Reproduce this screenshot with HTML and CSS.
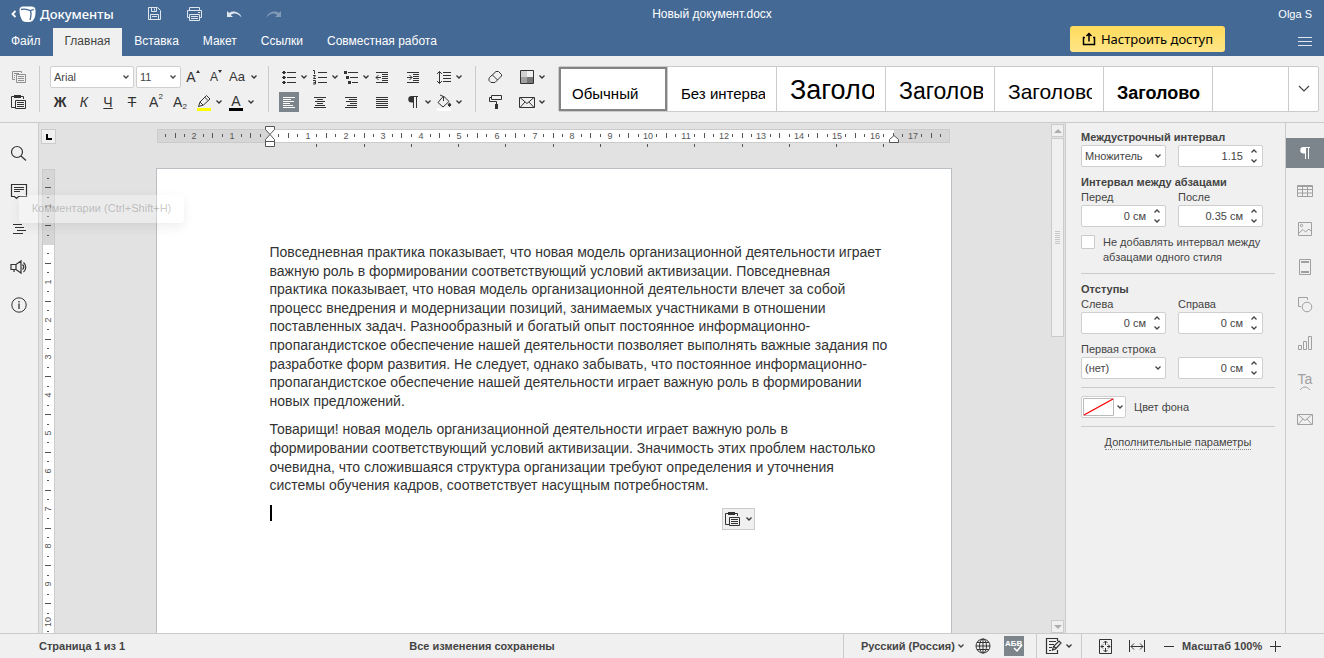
FILE: index.html
```html
<!DOCTYPE html>
<html lang="ru">
<head>
<meta charset="utf-8">
<title>Новый документ.docx</title>
<link rel="stylesheet" href="styles.css">
</head>
<body>
<svg class="defs" aria-hidden="true">
  <symbol id="chev" viewBox="0 0 8 8"><path d="M1.500 2.500L4 5l2.500-2.500" fill="none" stroke="currentColor" stroke-width="1.300"/></symbol>
  <symbol id="up" viewBox="0 0 8 8"><path d="M1.500 5.500L4 3l2.500 2.500" fill="none" stroke="currentColor" stroke-width="1.300"/></symbol>
  <symbol id="paste" viewBox="0 0 20 20"><path d="M6 15.500H2.500v-11H5M12 4.500h2.500V7" fill="none" stroke="currentColor"/><path d="M5 3h7v3H5z" fill="currentColor"/><path d="M6.500 8.500h10v8h-10zM8 10.500h7M8 12.500h7M8 14.500h7" fill="none" stroke="currentColor"/></symbol>
  <symbol id="mail" viewBox="0 0 20 20"><path d="M2.500 5.500h15v10h-15zM3 5.500l7 6 7-6M3 15.500l5-5.500M17 15.500L12 10" fill="none" stroke="currentColor"/></symbol>
  <symbol id="para" viewBox="0 0 20 20"><path d="M15 4.500H8.500M10.500 4v12M13.500 4v12" fill="none" stroke="currentColor"/><path d="M11 4H8.500a3.200 3.200 0 0 0 0 6.500H11z" fill="currentColor"/></symbol>
</svg>

<header class="header">
  <div class="header-main">
    <div class="title-row">
      <a class="brand" href="#">
        <svg width="26" height="18" viewBox="0 0 26 18"><path d="M5.500 6L2.500 9l3 3" fill="none" stroke="#fff" stroke-width="1.800"/><path fill="#fff" d="M13 1.500h8.500q4 0 4 4c0 4 0 6-1.500 8.500q-1.500 3-4 3h-4q-3.500 0-4.500-3C10 11 9.500 8 9.500 5q0-3.500 3.500-3.500z"/><path d="M11 4.500c3-.7 7-.2 9.500 1.200 1 3 .5 6-.5 9.300M20 5.700l4-1.200" fill="none" stroke="#446995" stroke-width="1.300"/></svg>
        <span>Документы</span>
      </a>
      <div class="quick">
        <button aria-label="Сохранить"><svg width="20" height="20" viewBox="0 0 20 20"><path d="M4.500 3.500h9l3 3v9h-12zM7.500 3.500v4h5v-4M10.500 4.500v2M6.500 15.500v-5h8v5M8 12.500h5" fill="none" stroke="currentColor"/></svg></button>
        <button aria-label="Печать"><svg width="20" height="20" viewBox="0 0 20 20"><path d="M5.500 6.500v-3h10v3M5.500 13.500h-2v-7h14v7h-2M5.500 10.500h10v6h-10zM7 12.500h7M7 14.500h7M14 8.500h2" fill="none" stroke="currentColor"/></svg></button>
        <button aria-label="Отменить"><svg width="20" height="20" viewBox="0 0 20 20"><path d="M3 7v6h6L6.800 11c3-2.500 7-2 10.700 2.500C16.500 8.500 9.500 5.500 5.200 9z" fill="currentColor"/></svg></button>
        <button aria-label="Повторить" disabled><svg width="20" height="20" viewBox="0 0 20 20"><path d="M17 7v6h-6l2.200-2c-3-2.500-7-2-10.700 2.500C3.500 8.500 10.500 5.500 14.800 9z" fill="currentColor"/></svg></button>
      </div>
      <div class="doc-title">Новый документ.docx</div>
    </div>
    <nav class="tabs">
      <button>Файл</button><button class="active">Главная</button><button>Вставка</button><button>Макет</button><button>Ссылки</button><button>Совместная работа</button>
    </nav>
  </div>
  <button class="share"><svg width="14" height="14" viewBox="0 0 14 14"><path d="M3 5.500H1.500v7h11v-7H11M7 9.500V2M4.500 4L7 1.500 9.500 4" fill="none" stroke="#000" stroke-width="1.500"/></svg>Настроить доступ</button>
  <div class="header-side">
    <div class="user">Olga S</div>
    <button class="burger" aria-label="Меню"><svg width="14" height="10" viewBox="0 0 14 10"><path d="M0 .5h14M0 4.500h14M0 8.500h14" stroke="#dfe6ee"/></svg></button>
  </div>
</header>

<div class="toolbar">
  <div class="group clip">
    <div class="row"><button class="dim" aria-label="Копировать"><svg width="20" height="20" viewBox="0 0 20 20"><path d="M6 12.500H3.500v-8h9V6M5 6.500h5M5 8.500h1M5 10.500h1M7.500 7.500h9v8h-9zM9 9.500h6M9 11.500h6M9 13.500h6" fill="none" stroke="currentColor"/></svg></button></div>
    <div class="row"><button aria-label="Вставить"><svg width="20" height="20"><use href="#paste"/></svg></button></div>
  </div>
  <div class="group font">
    <div class="row">
      <label class="pick family"><select aria-label="Шрифт"><option>Arial</option></select><svg width="8" height="8"><use href="#chev"/></svg></label>
      <label class="pick size"><select aria-label="Размер"><option>11</option></select><svg width="8" height="8"><use href="#chev"/></svg></label>
      <div class="letters">
        <button aria-label="Увеличить размер">A<svg class="tri" width="4" height="4"><path d="M0 3l2-3 2 3z" fill="currentColor"/></svg></button>
        <button class="smaller" aria-label="Уменьшить размер">A<svg class="tri" width="4" height="4"><path d="M0 0l2 3 2-3z" fill="currentColor"/></svg></button>
        <button class="split" aria-label="Регистр"><span>Aa</span><svg width="8" height="8"><use href="#chev"/></svg></button>
      </div>
    </div>
    <div class="row glyphs">
      <button><b>Ж</b></button><button><i>К</i></button><button><u>Ч</u></button><button><s>Т</s></button><button>A<sup>2</sup></button><button>A<sub>2</sub></button>
      <button class="split" aria-label="Цвет выделения"><svg width="20" height="20" viewBox="0 0 20 20"><path d="M4.500 14.500l1.500-4.500 6.500-6.500 3.500 3.500-6.500 6zM10.500 5l3.500 3.500M6 10l3 3" fill="none" stroke="currentColor"/><path d="M3 16h14v3H3z" fill="#ff0"/></svg><svg width="8" height="8"><use href="#chev"/></svg></button>
      <button class="split" aria-label="Цвет шрифта"><span class="ink">A</span><svg width="8" height="8"><use href="#chev"/></svg></button>
    </div>
  </div>
  <div class="group para-group">
    <button class="split" aria-label="Маркеры"><svg width="20" height="20" viewBox="0 0 20 20"><path d="M8 5.500h9M8 10.500h9M8 15.500h9" stroke="currentColor"/><path d="M4 4h2v1h1v1H6v1H4V6H3V5h1zM4 9h2v1h1v1H6v1H4v-1H3v-1h1zM4 14h2v1h1v1H6v1H4v-1H3v-1h1z" fill="currentColor"/></svg><svg width="8" height="8"><use href="#chev"/></svg></button>
    <button class="split" aria-label="Нумерация"><svg width="20" height="20" viewBox="0 0 20 20"><path d="M8 5.500h9M8 10.500h9M8 15.500h9M3 3.500h1.500V7M3 8.500h2.500l-2 3H6M3 13.500h2.500v3.500H3M3.500 15.500h2" fill="none" stroke="currentColor"/></svg><svg width="8" height="8"><use href="#chev"/></svg></button>
    <button class="split" aria-label="Многоуровневый список"><svg width="20" height="20" viewBox="0 0 20 20"><path d="M7 5.500h10M9 10.500h8M11 15.500h6" stroke="currentColor"/><path d="M3 4h3v3H3zM5 9h3v3H5zM7 14h3v3H7z" fill="currentColor"/></svg><svg width="8" height="8"><use href="#chev"/></svg></button>
    <button aria-label="Уменьшить отступ"><svg width="20" height="20" viewBox="0 0 20 20"><path d="M4 5.500h12M10 7.500h6M10 9.500h6M10 11.500h6M10 13.500h6M4 15.500h12M4 10.500h5M6.500 8L4 10.500 6.500 13" fill="none" stroke="currentColor"/></svg></button>
    <button aria-label="Увеличить отступ"><svg width="20" height="20" viewBox="0 0 20 20"><path d="M4 5.500h12M10 7.500h6M10 9.500h6M10 11.500h6M10 13.500h6M4 15.500h12M4 10.500h5M6.500 8L9 10.500 6.500 13" fill="none" stroke="currentColor"/></svg></button>
    <button class="split" aria-label="Междустрочный интервал"><svg width="20" height="20" viewBox="0 0 20 20"><path d="M9 5.500h8M9 8.500h8M9 11.500h8M9 14.500h8M5.500 4.500v12M3 7l2.500-2.500L8 7M3 14l2.500 2.500L8 14" fill="none" stroke="currentColor"/></svg><svg width="8" height="8"><use href="#chev"/></svg></button>
    <button class="pressed" aria-label="По левому краю"><svg width="20" height="20" viewBox="0 0 20 20"><path d="M4 5.500h12M4 7.500h8M4 9.500h11M4 11.500h7M4 13.500h10M4 15.500h12" stroke="currentColor"/></svg></button>
    <button aria-label="По центру"><svg width="20" height="20" viewBox="0 0 20 20"><path d="M4 5.500h12M7 7.500h6M5 9.500h10M7 11.500h6M5 13.500h10M4 15.500h12" stroke="currentColor"/></svg></button>
    <button aria-label="По правому краю"><svg width="20" height="20" viewBox="0 0 20 20"><path d="M4 5.500h12M8 7.500h8M5 9.500h11M9 11.500h7M6 13.500h10M4 15.500h12" stroke="currentColor"/></svg></button>
    <button aria-label="По ширине"><svg width="20" height="20" viewBox="0 0 20 20"><path d="M4 5.500h12M4 7.500h12M4 9.500h12M4 11.500h12M4 13.500h12M4 15.500h12" stroke="currentColor"/></svg></button>
    <button class="split" aria-label="Непечатаемые символы"><svg width="20" height="20"><use href="#para"/></svg><svg width="8" height="8"><use href="#chev"/></svg></button>
    <button class="split" aria-label="Цвет заливки"><svg width="20" height="20" viewBox="0 0 20 20"><path d="M3 16h14v3H3z" fill="#fff"/><path d="M4 10.500L9.500 4l5.500 5.500-6 5.500zM9.500 9V4.500L6 3" fill="none" stroke="currentColor"/><path d="M15.500 11l1.500 2-1.500 1.500L14 13z" fill="currentColor" stroke="currentColor"/></svg><svg width="8" height="8"><use href="#chev"/></svg></button>
  </div>
  <div class="group misc">
    <button aria-label="Очистить стиль"><svg width="20" height="20" viewBox="0 0 20 20"><path d="M4.500 10.500L11 4.500h2.500l3 3V9l-6.500 6.500H6L4 13.500v-2zM7.500 8l5 5" fill="none" stroke="currentColor"/></svg></button>
    <button class="split" aria-label="Цветовая схема"><svg width="20" height="20" viewBox="0 0 20 20"><path d="M4 4h6v6H4z" fill="#d0d0d0"/><path d="M10 4h6v6h-6z" fill="#f0f0f0"/><path d="M4 10h6v6H4z" fill="#a0a0a0"/><path d="M10 10h6v6h-6z" fill="#777"/><path d="M3.500 3.500h13v13h-13z" fill="none" stroke="currentColor"/></svg><svg width="8" height="8"><use href="#chev"/></svg></button>
    <button aria-label="Копировать стиль"><svg width="20" height="20" viewBox="0 0 20 20"><path d="M6.500 3.500h10v4h-10zM6.500 5.500h-2v4h7V12" fill="none" stroke="currentColor"/><path d="M10 12h3v5h-3z" fill="currentColor"/></svg></button>
    <button class="split" aria-label="Слияние"><svg width="20" height="20"><use href="#mail"/></svg><svg width="8" height="8"><use href="#chev"/></svg></button>
  </div>
  <div class="gallery">
    <button class="style chosen"><span>Обычный</span></button>
    <button class="style"><span>Без интервала</span></button>
    <button class="style h1"><span>Заголовок 1</span></button>
    <button class="style h2"><span>Заголовок 2</span></button>
    <button class="style h3"><span>Заголовок 3</span></button>
    <button class="style h4"><span>Заголовок 4</span></button>
    <div class="filler"></div>
    <button class="more" aria-label="Все стили"><svg width="12" height="8" viewBox="0 0 12 8"><path d="M1 1l5 5 5-5" fill="none" stroke="#444" stroke-width="1.200"/></svg></button>
  </div>
</div>

<main class="work">
  <aside class="rail left">
    <button aria-label="Поиск"><svg width="20" height="20" viewBox="0 0 20 20"><circle cx="8" cy="9" r="5.500" fill="none" stroke="currentColor" stroke-width="1.200"/><path d="M12 13l5 4.500" stroke="currentColor" stroke-width="1.200"/></svg></button>
    <button aria-label="Комментарии"><svg width="20" height="20" viewBox="0 0 20 20"><path d="M2.500 3.500h15v12H9.500l-2 2-2-2h-3zM5 6.500h10M5 8.500h10M5 10.500h6" fill="none" stroke="currentColor" stroke-width="1.200"/></svg></button>
    <button aria-label="Навигация"><svg width="20" height="20" viewBox="0 0 20 20"><path d="M4 5.500h9M6 8.500h9M8 11.500h9M4 14.500h10" stroke="currentColor"/></svg></button>
    <button aria-label="Обратная связь"><svg width="20" height="20" viewBox="0 0 20 20"><path d="M2 7.500h5L12 4v12l-5-3.500H2zM7 7.500v5M5 12.500V15M13.500 7.500c1.500 1.500 1.500 3.500 0 5M14.500 5.500c3 2.500 3 7 0 9.500" fill="none" stroke="currentColor" stroke-width="1.200"/></svg></button>
    <button aria-label="О программе"><svg width="20" height="20" viewBox="0 0 20 20"><circle cx="10" cy="10" r="7.200" fill="none" stroke="currentColor"/><path d="M10 8.500V14M10 6v1.500" stroke="currentColor" stroke-width="1.300"/></svg></button>
    <div class="tooltip">Комментарии (Ctrl+Shift+H)</div>
  </aside>

  <section class="editor">
    <button class="tab-kind" aria-label="Табуляция"><svg width="6" height="6"><path d="M1 0v5h5" fill="none" stroke="#000" stroke-width="2"/></svg></button>
    <div class="ruler-h"><svg id="rulerH" width="796" height="24"></svg></div>
    <div class="ruler-v"><svg id="rulerV" width="13" height="1123"></svg></div>
    <div class="canvas">
      <article class="page">
        <p>Повседневная практика показывает, что новая модель организационной деятельности играет<br>важную роль в формировании соответствующий условий активизации. Повседневная<br>практика показывает, что новая модель организационной деятельности влечет за собой<br>процесс внедрения и модернизации позиций, занимаемых участниками в отношении<br>поставленных задач. Разнообразный и богатый опыт постоянное информационно-<br>пропагандистское обеспечение нашей деятельности позволяет выполнять важные задания по<br>разработке форм развития. Не следует, однако забывать, что постоянное информационно-<br>пропагандистское обеспечение нашей деятельности играет важную роль в формировании<br>новых предложений.</p>
        <p>Товарищи! новая модель организационной деятельности играет важную роль в<br>формировании соответствующий условий активизации. Значимость этих проблем настолько<br>очевидна, что сложившаяся структура организации требуют определения и уточнения<br>системы обучения кадров, соответствует насущным потребностям.</p>
        <p><span class="caret"></span></p>
        <button class="paste-menu" aria-label="Параметры вставки"><svg width="20" height="20"><use href="#paste"/></svg><svg width="8" height="8"><use href="#chev"/></svg></button>
      </article>
    </div>
    <div class="scroll">
      <button aria-label="Вверх"><svg width="8" height="4"><path d="M0 4l4-4 4 4z" fill="#adadad"/></svg></button>
      <div class="thumb"><svg width="5" height="13"><path d="M0 .5h5M0 2.500h5M0 4.500h5M0 6.500h5M0 8.500h5M0 10.500h5M0 12.500h5" stroke="#c8c8c8"/></svg></div>
      <button aria-label="Вниз"><svg width="8" height="4"><path d="M0 0l4 4 4-4z" fill="#adadad"/></svg></button>
    </div>
  </section>

  <aside class="panel">
    <h2>Междустрочный интервал</h2>
    <div class="pair">
      <label class="pick"><select aria-label="Междустрочный интервал"><option>Множитель</option></select><svg width="8" height="8"><use href="#chev"/></svg></label>
      <div class="spin"><input aria-label="Значение" value="1.15"><div><button aria-label="Больше"><svg width="8" height="8"><use href="#up"/></svg></button><button aria-label="Меньше"><svg width="8" height="8"><use href="#chev"/></svg></button></div></div>
    </div>
    <h2>Интервал между абзацами</h2>
    <div class="pair">
      <label for="before">Перед</label><label for="after">После</label>
      <div class="spin"><input id="before" value="0 см"><div><button aria-label="Больше"><svg width="8" height="8"><use href="#up"/></svg></button><button aria-label="Меньше"><svg width="8" height="8"><use href="#chev"/></svg></button></div></div>
      <div class="spin"><input id="after" value="0.35 см"><div><button aria-label="Больше"><svg width="8" height="8"><use href="#up"/></svg></button><button aria-label="Меньше"><svg width="8" height="8"><use href="#chev"/></svg></button></div></div>
    </div>
    <label class="check"><input type="checkbox"><span>Не добавлять интервал между абзацами одного стиля</span></label>
    <hr>
    <h2>Отступы</h2>
    <div class="pair">
      <label for="left">Слева</label><label for="right">Справа</label>
      <div class="spin"><input id="left" value="0 см"><div><button aria-label="Больше"><svg width="8" height="8"><use href="#up"/></svg></button><button aria-label="Меньше"><svg width="8" height="8"><use href="#chev"/></svg></button></div></div>
      <div class="spin"><input id="right" value="0 см"><div><button aria-label="Больше"><svg width="8" height="8"><use href="#up"/></svg></button><button aria-label="Меньше"><svg width="8" height="8"><use href="#chev"/></svg></button></div></div>
    </div>
    <div class="pair first-line">
      <label class="wide" for="first">Первая строка</label>
      <div class="pick"><select id="first"><option>(нет)</option></select><svg width="8" height="8"><use href="#chev"/></svg></div>
      <div class="spin"><input aria-label="Отступ первой строки" value="0 см"><div><button aria-label="Больше"><svg width="8" height="8"><use href="#up"/></svg></button><button aria-label="Меньше"><svg width="8" height="8"><use href="#chev"/></svg></button></div></div>
    </div>
    <hr>
    <div class="fill"><button id="bg" aria-label="Цвет фона"><svg width="32" height="18" viewBox="0 0 32 18"><path d="M.5.500h30v17H.5z" fill="#fff" stroke="#bbb"/><path d="M1 17L30 1" stroke="#f00" stroke-width="1.300"/></svg><svg width="8" height="8"><use href="#chev"/></svg></button><label for="bg">Цвет фона</label></div>
    <hr>
    <div class="extra"><a href="#">Дополнительные параметры</a></div>
  </aside>

  <aside class="rail right">
    <button class="pressed" aria-label="Абзац"><svg width="20" height="20"><use href="#para"/></svg></button>
    <button aria-label="Таблица"><svg width="20" height="20" viewBox="0 0 20 20"><path d="M2.500 4.500h15v11h-15zM2.500 8.500h15M2.500 12h15M7.500 5.500v10M12.500 5.500v10M3 5.500h15" fill="none" stroke="currentColor"/></svg></button>
    <button aria-label="Изображение"><svg width="20" height="20" viewBox="0 0 20 20"><path d="M3.500 3.500h13v13h-13zM4 14l4-3.500 2.500 2.500 3.500-3 2.500 2.500" fill="none" stroke="currentColor"/><circle cx="6.500" cy="6.500" r="1.200" fill="none" stroke="currentColor"/></svg></button>
    <button aria-label="Колонтитулы"><svg width="20" height="20" viewBox="0 0 20 20"><path d="M4.500 2.500h11v15h-11z" fill="none" stroke="currentColor"/><path d="M6 5h8M6 15h8" stroke="currentColor" stroke-width="2"/></svg></button>
    <button aria-label="Фигура"><svg width="20" height="20" viewBox="0 0 20 20"><path d="M6 11.500H3.500v-9h9V5" fill="none" stroke="currentColor"/><circle cx="12" cy="12" r="4.800" fill="none" stroke="currentColor"/></svg></button>
    <button aria-label="Диаграмма"><svg width="20" height="20" viewBox="0 0 20 20"><path d="M3.500 12.500h3v4h-3zM8.500 8.500h3v8h-3zM13.500 3.500h3v13h-3z" fill="none" stroke="currentColor"/></svg></button>
    <button class="art" aria-label="Text Art"><span>Ta</span><svg width="12" height="4"><path d="M1 4c3-4 7-4 10 0" fill="none" stroke="currentColor"/></svg></button>
    <button aria-label="Слияние"><svg width="20" height="20"><use href="#mail"/></svg></button>
  </aside>
</main>

<footer class="status">
  <div class="page-no">Страница 1 из 1</div>
  <div class="saved">Все изменения сохранены</div>
  <div class="seg lang">
    <button class="language">Русский (Россия)<svg width="8" height="8"><use href="#chev"/></svg></button>
    <button aria-label="Язык документа"><svg width="20" height="20" viewBox="0 0 20 20"><g fill="none" stroke="currentColor"><circle cx="10" cy="10" r="7"/><ellipse cx="10" cy="10" rx="3.500" ry="7"/><path d="M10 3v14M3 10h14M4 6.500h12M4 13.500h12"/></g></svg></button>
    <button class="pressed spell" aria-label="Проверка орфографии"><svg width="20" height="20" viewBox="0 0 20 20"><text x="1" y="10" class="abc">АБВ</text><path d="M10 12l3 3 5-6" fill="none" stroke="#fff" stroke-width="1.500"/></svg></button>
  </div>
  <div class="seg track">
    <button class="split" aria-label="Отслеживание"><svg width="20" height="20" viewBox="0 0 20 20"><path d="M13.500 5V2.500h-11v15h11V14M5 5.500h7M5 8.500h5M5 11.500h3M5 14.500h2M8.500 14l1-3.500L15 5l2 2-5.500 6zM10 10.500l2 2" fill="none" stroke="currentColor" stroke-width="1.200"/></svg><svg width="8" height="8"><use href="#chev"/></svg></button>
  </div>
  <div class="seg zoom">
    <button aria-label="По размеру страницы"><svg width="20" height="20" viewBox="0 0 20 20"><path d="M4.500 3.500h12v14h-12zM10.500 5v4M10.500 12v4M6 10.500h3M12 10.500h3M8.500 7l2-2 2 2M8.500 14l2 2 2-2M8 8.500l-2 2 2 2M13 8.500l2 2-2 2" fill="none" stroke="currentColor"/></svg></button>
    <button aria-label="По ширине"><svg width="20" height="20" viewBox="0 0 20 20"><path d="M2.500 4v12M17.500 4v12M4 10.500h12M7 7.500l-3 3 3 3M13 7.500l3 3-3 3" fill="none" stroke="currentColor"/></svg></button>
    <button aria-label="Уменьшить"><svg width="20" height="20" viewBox="0 0 20 20"><path d="M5 10.500h10" stroke="currentColor" stroke-width="1"/></svg></button>
    <span class="scale">Масштаб 100%</span>
    <button aria-label="Увеличить"><svg width="20" height="20" viewBox="0 0 20 20"><path d="M5 10.500h11M10.500 5v11" stroke="currentColor"/></svg></button>
  </div>
</footer>
<script src="rulers.js"></script>
</body>
</html>
```
FILE: styles.css
```css
* { box-sizing: border-box; }
body { margin: 0; height: 100vh; display: flex; flex-direction: column; overflow: hidden; background: #f0f0f0; color: #444; font: 11px/15px "Liberation Sans", Arial, sans-serif; }
button { display: flex; align-items: center; justify-content: center; padding: 0; border: 0; background: none; color: inherit; font: inherit; }
svg { display: block; flex: none; }
.defs { position: absolute; width: 0; height: 0; }
.pressed { background: #7d858c; color: #fff; }

/* header */
.header { flex: none; display: flex; background: #446995; color: #fff; }
.header-main { flex: 1; }
.title-row { display: flex; align-items: center; height: 28px; }
.brand { display: flex; align-items: center; gap: 4px; width: 134px; padding-left: 10px; color: #fff; text-decoration: none; font: 500 13px/18px "Noto Sans", "Open Sans", sans-serif; }
.quick { display: flex; width: 220px; color: #dfe6ee; }
.quick button { width: 40px; height: 28px; }
.quick button:disabled { opacity: .4; }
.doc-title { flex: 1; text-align: center; font-size: 12px; }
.tabs { display: flex; height: 28px; }
.tabs button { padding: 0 12px 2px; font-size: 12px; }
.tabs button:first-child { padding-left: 11px; }
.tabs .active { background: #f0f0f0; color: #444; }
.share { align-self: flex-end; gap: 5px; width: 155px; height: 26px; margin-bottom: 4px; border-radius: 3px; background: linear-gradient(#ffdb5c, #ffe587); color: #000; font: 13px/18px "Noto Sans", "Open Sans", sans-serif; }
.header-side { width: 99px; padding-right: 12px; display: flex; flex-direction: column; align-items: flex-end; }
.user { line-height: 28px; }
.burger { height: 28px; }

/* toolbar */
.toolbar { flex: none; display: flex; height: 67px; padding: 10px 5px 0 0; border-bottom: 1px solid #cbcbcb; color: #333; }
.toolbar button { height: 20px; width: 20px; }
.toolbar button.split { width: 30px; }
.split { gap: 1px; justify-content: flex-start; }
.row { display: flex; align-items: center; height: 22px; margin-bottom: 3px; }
.group { height: 46px; border-right: 1px solid #cbcbcb; }
.clip { width: 40px; padding-left: 9px; }
.dim { opacity: .5; }
.font { width: 229px; padding-left: 10px; }
.font .row { gap: 2px; }
.font .glyphs { gap: 4px; font-size: 14px; }
.font .glyphs .split { margin-right: -2px; }
.pick { display: grid; align-items: center; height: 22px; border: 1px solid #cfcfcf; border-radius: 2px; background: #fff; color: #444; }
.pick select { grid-area: 1 / 1; width: 100%; height: 20px; padding: 0 3px; border: 0; background: none; appearance: none; color: inherit; font: inherit; }
.pick svg { grid-area: 1 / 1; justify-self: end; margin-right: 3px; pointer-events: none; }
.family { width: 84px; }
.size { width: 45px; }
.letters { display: flex; gap: 3px; font-size: 14px; }
.letters button { align-items: flex-start; line-height: 20px; }
.letters .split { align-items: center; font-size: 13px; width: 28px; }
.letters .split span { width: 20px; text-align: left; }
.letters .smaller { font-size: 12px; }
.tri { margin-top: 3px; }
.glyphs sup, .glyphs sub { font-size: 8px; line-height: 10px; }
.glyphs sup { align-self: flex-start; }
.glyphs sub { align-self: flex-end; }
.ink { width: 14px; height: 18px; margin: 0 3px; border-bottom: 3px solid #000; line-height: 16px; text-align: center; }
.para-group { display: grid; grid-template: 22px 22px / repeat(6, 31px); row-gap: 3px; align-items: center; width: 207px; padding-left: 10px; }
.misc { display: grid; grid-template: 22px 22px / 32px 32px; row-gap: 3px; align-items: center; width: 82px; padding-left: 9px; border: 0; }
.gallery { flex: 1; display: flex; height: 46px; border: 1px solid #cbcbcb; border-radius: 2px; background: #fff; color: #000; }
.toolbar .style { display: block; flex: none; width: 109px; height: 44px; padding: 0 11px 0 13px; border-right: 1px solid #cbcbcb; text-align: left; font-size: 15px; line-height: 1; }
.style span { display: block; overflow: hidden; height: 44px; white-space: nowrap; }
.style span::before { content: ""; display: inline-block; height: 32px; }
.toolbar .chosen { box-shadow: inset 0 0 0 2px #848484; }
.toolbar .h1 { font-size: 27px; }
.toolbar .h2 { font-size: 23px; }
.toolbar .h3 { font-size: 21px; }
.toolbar .h4 { font-size: 18px; font-weight: bold; }
.filler { flex: 1; }
.toolbar .more { width: 30px; height: 44px; border-left: 1px solid #cbcbcb; }

/* workspace */
.work { flex: 1; min-height: 0; display: flex; }
.rail { flex: none; display: flex; flex-direction: column; gap: 8px; width: 39px; padding-top: 15px; color: #333; }
.rail button { width: 38px; height: 30px; }
.left { position: relative; border-right: 1px solid #cbcbcb; }
.right { border-left: 1px solid #cbcbcb; color: #a0a0a0; }
.right .pressed { color: #fff; }
.rail .art { flex-direction: column; font-size: 14px; line-height: 14px; }
.tooltip { position: absolute; z-index: 2; left: 19px; top: 72px; width: 165px; height: 28px; border-radius: 4px; background: rgba(255, 255, 255, .3); box-shadow: 0 4px 12px rgba(0, 0, 0, .07); color: rgba(68, 68, 68, .3); line-height: 27px; text-align: center; white-space: nowrap; }

.editor { flex: 1; min-width: 0; display: grid; grid-template: 45px minmax(0, 1fr) / 17px minmax(0, 1fr) 14px; overflow: hidden; background: #e2e2e2; }
.tab-kind { width: 15px; height: 15px; margin: 6px 0 0 2px; border: 1px solid #cbcbcb; background: #f0f0f0; }
.ruler-h { grid-column: 2; display: flex; justify-content: center; padding-top: 3px; overflow: hidden; }
.ruler-v { grid-area: 2 / 1; padding: 1px 0 0 3px; overflow: hidden; }
#rulerH, #rulerV { font-size: 9px; fill: #555; }
.canvas { grid-area: 2 / 2; display: flex; justify-content: center; overflow: hidden; }
.page { position: relative; flex: none; width: 796px; height: 1123px; padding: 74px 56px 0 113px; border: 1px solid #bbbec2; background: #fff; color: #333; font-size: 14px; line-height: 1.33; white-space: nowrap; }
.page p { margin: 0 0 10px; }
.caret { display: block; width: 2px; height: 16px; background: #000; }
.paste-menu { position: absolute; left: 565px; top: 339px; width: 33px; height: 22px; gap: 2px; border: 1px solid #cbcbcb; background: #f0f0f0; color: #333; }
.scroll { grid-area: 1 / 3 / 3 / 4; display: flex; flex-direction: column; gap: 1px; padding: 1px 1px 0 0; }
.scroll button { width: 13px; height: 13px; border: 1px solid #cbcbcb; background: #f0f0f0; flex: none; }
.scroll button:last-child { margin-top: auto; }
.thumb { display: flex; align-items: center; justify-content: center; flex: 0 0 199px; width: 13px; border: 1px solid #cbcbcb; background: #f0f0f0; }

/* paragraph panel */
.panel { flex: none; width: 220px; padding: 7px 10px 0 15px; border-left: 1px solid #cbcbcb; }
.panel h2 { margin: 0; font-size: 11px; line-height: 15px; }
.pair { display: grid; grid-template-columns: 85px 85px; column-gap: 12px; margin-bottom: 8px; }
.wide { grid-column: 1 / 3; }
.spin { display: flex; height: 22px; border: 1px solid #cfcfcf; border-radius: 2px; background: #fff; }
.spin input { flex: 1; min-width: 0; padding: 0 2px; border: 0; background: none; color: inherit; font: inherit; text-align: right; }
.spin div { display: flex; flex-direction: column; justify-content: center; gap: 2px; width: 17px; }
.spin button { height: 8px; }
.check { display: flex; gap: 8px; width: 190px; }
.check input { flex: none; appearance: none; width: 14px; height: 14px; margin: 0; border: 1px solid #cbcbcb; border-radius: 1px; background: #fff; }
.check span { white-space: normal; }
.panel hr { height: 1px; margin: 8px 0; border: 0; background: #cbcbcb; }
.first-line { margin-bottom: 0; }
.fill { display: flex; align-items: center; gap: 8px; }
.fill button { width: 45px; height: 22px; border: 1px solid #cfcfcf; border-radius: 2px; background: #fff; gap: 1px; }
.extra { text-align: center; }
.extra a { padding-bottom: 1px; color: inherit; text-decoration: none; border-bottom: 1px dotted #888; }

/* status bar */
.status { flex: none; display: flex; align-items: center; height: 25px; border-top: 1px solid #cbcbcb; font-weight: bold; }
.page-no { width: 125px; padding-left: 39px; white-space: nowrap; }
.saved { flex: 1; padding-right: 4px; text-align: center; }
.seg { display: flex; align-items: center; height: 24px; border-left: 1px solid #cbcbcb; color: #333; }
.seg button { height: 20px; min-width: 20px; }
.lang { width: 193px; padding-left: 17px; }
.seg .language { justify-content: flex-start; gap: 2px; width: 112px; color: #444; }
.lang .spell { margin-left: 11px; }
.abc { font: bold 8px "Liberation Sans", sans-serif; fill: #fff; }
.track { width: 45px; padding-left: 7px; }
.zoom { width: 243px; padding-left: 13px; gap: 12px; }
.scale { margin: 0 -9px; color: #444; white-space: nowrap; }
```
FILE: rulers.js
```js
// Centimetre scales: a short tick at each quarter, a long one at each half, a number at each whole.
const CM = 37.8;

function ruler(from, to, zero, draw) {
  let out = '';
  for (let q = from; q <= to; q++) {
    if (q === 0) continue;
    const at = Math.round(zero + q * CM / 4);
    if (q % 4 === 0) out += draw.label(at, Math.abs(q / 4));
    else out += draw.tick(at, q % 2 === 0);
  }
  return out;
}

document.getElementById('rulerH').innerHTML =
  '<rect x="1.5" y="3.5" width="792" height="13" fill="#d6d6d6" stroke="#cbcbcb"/>' +
  '<rect x="114" y="4" width="624" height="12" fill="#fff"/>' +
  ruler(-11, 71, 113, {
    label: (x, n) => `<text x="${x + 1}" y="13" text-anchor="middle">${n}</text>`,
    tick: (x, half) => `<rect x="${x}" y="${half ? 7 : 8}" width="1" height="${half ? 5 : 3}"/>`
  }) +
  Array.from({ length: 13 }, (_, i) =>
    `<rect x="${Math.round(113 + (i + 1) * CM * 1.25)}" y="18" width="1" height="3"/>`).join('') +
  '<g fill="#fff" stroke="#555"><path d="M109.500.500h9v3l-4.500 5-4.500-5z"/><path d="M109.500 13.500l4.500-5 4.500 5v7h-9zM109.500 15.500h9"/>' +
  '<path d="M733.500 16.500v-3l4.500-4 4.500 4v3z"/></g>';

document.getElementById('rulerV').innerHTML =
  '<rect x=".5" y=".5" width="12" height="1122" fill="#fff" stroke="#cbcbcb"/>' +
  '<rect x="1" y="1" width="11" height="75" fill="#d6d6d6"/>' +
  ruler(-7, 100, 75, {
    label: (y, n) => `<text transform="translate(9 ${y}) rotate(-90)" text-anchor="middle">${n}</text>`,
    tick: (y, half) => `<rect x="${half ? 3 : 5}" y="${y}" width="${half ? 6 : 2}" height="1"/>`
  });
```
